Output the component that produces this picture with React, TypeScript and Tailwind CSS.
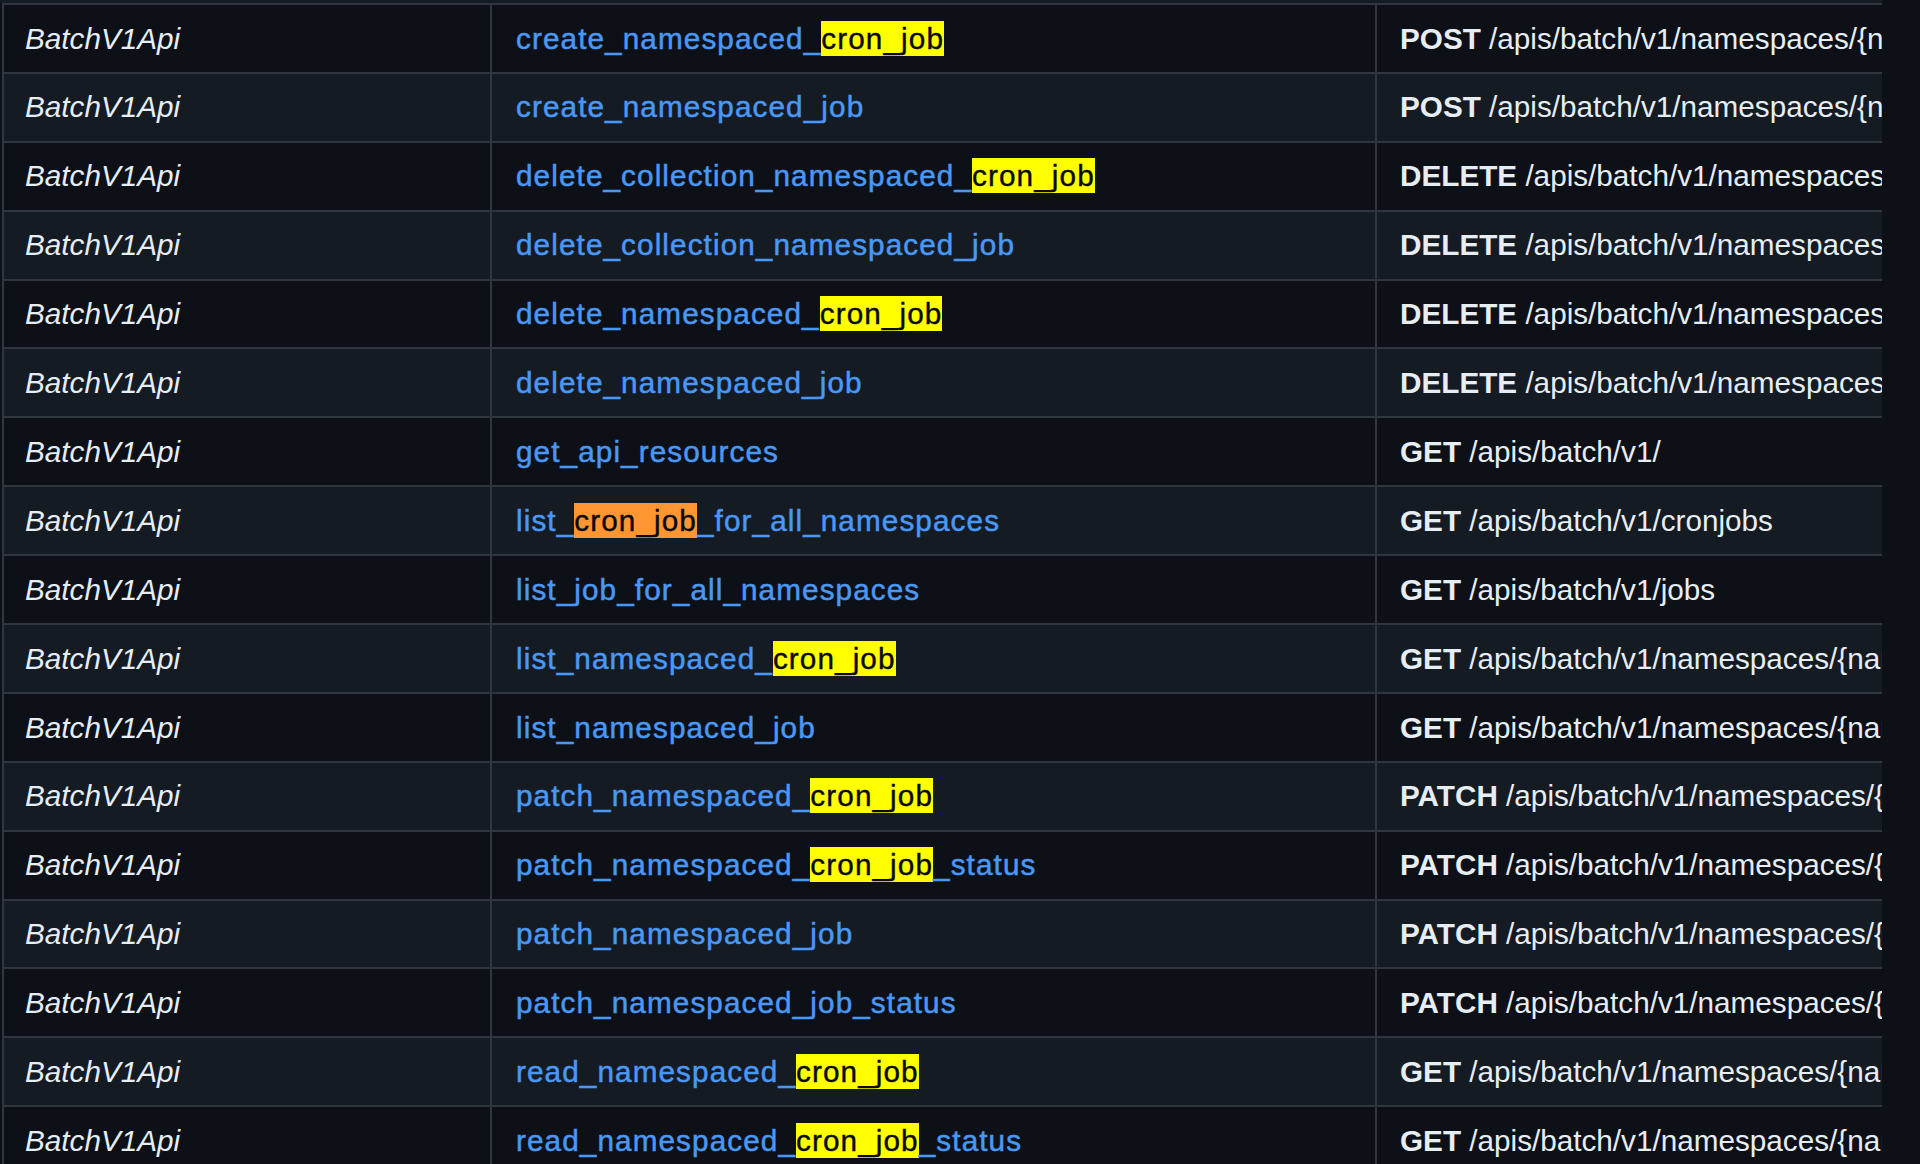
import React from "react";

type Row = { fn: string; method: string; path: string };

const NS = "/apis/batch/v1/namespaces/{namespace}";

const rows: Row[] = [
  { fn: "create_namespaced_cron_job", method: "POST", path: `${NS}/cronjobs` },
  { fn: "create_namespaced_job", method: "POST", path: `${NS}/jobs` },
  { fn: "delete_collection_namespaced_cron_job", method: "DELETE", path: `${NS}/cronjobs` },
  { fn: "delete_collection_namespaced_job", method: "DELETE", path: `${NS}/jobs` },
  { fn: "delete_namespaced_cron_job", method: "DELETE", path: `${NS}/cronjobs/{name}` },
  { fn: "delete_namespaced_job", method: "DELETE", path: `${NS}/jobs/{name}` },
  { fn: "get_api_resources", method: "GET", path: "/apis/batch/v1/" },
  { fn: "list_cron_job_for_all_namespaces", method: "GET", path: "/apis/batch/v1/cronjobs" },
  { fn: "list_job_for_all_namespaces", method: "GET", path: "/apis/batch/v1/jobs" },
  { fn: "list_namespaced_cron_job", method: "GET", path: `${NS}/cronjobs` },
  { fn: "list_namespaced_job", method: "GET", path: `${NS}/jobs` },
  { fn: "patch_namespaced_cron_job", method: "PATCH", path: `${NS}/cronjobs/{name}` },
  { fn: "patch_namespaced_cron_job_status", method: "PATCH", path: `${NS}/cronjobs/{name}/status` },
  { fn: "patch_namespaced_job", method: "PATCH", path: `${NS}/jobs/{name}` },
  { fn: "patch_namespaced_job_status", method: "PATCH", path: `${NS}/jobs/{name}/status` },
  { fn: "read_namespaced_cron_job", method: "GET", path: `${NS}/cronjobs/{name}` },
  { fn: "read_namespaced_cron_job_status", method: "GET", path: `${NS}/cronjobs/{name}/status` },
];

function FnName({ name, active }: { name: string; active: boolean }) {
  const key = "cron_job";
  const i = name.indexOf(key);
  if (i < 0) return <>{name}</>;
  return (
    <>
      {name.slice(0, i)}
      <span
        className={
          active
            ? "bg-[#ff9632] py-[1px] text-[#0a0a0a] [-webkit-text-stroke:0.4px_#0a0a0a]"
            : "bg-[#ffff00] py-[1px] text-[#0a0a0a] [-webkit-text-stroke:0.4px_#0a0a0a]"
        }
      >
        {key}
      </span>
      {name.slice(i + key.length)}
    </>
  );
}

export default function App() {
  return (
    <div
      className="w-full h-[1164px] overflow-hidden bg-[#0d1117]"
      style={{ fontFamily: '"Liberation Sans", Arial, sans-serif' }}
    >
      <div className="h-[3px] w-[1882px] bg-[#151b23]" />
      <div className="ml-[2px] w-[1880px] overflow-hidden border-b-2 border-[#30363d]">
        {rows.map((r, idx) => (
          <div
            key={idx}
            className={
              "flex h-[68.9px] border-t-2 border-[#30363d] text-[29.7px] leading-none " +
              (idx % 2 === 1 ? "bg-[#151b23]" : "bg-[#0d1117]")
            }
          >
            <div className="flex w-[488px] shrink-0 items-center border-l-2 border-[#30363d] pl-[21px] italic text-[#e6edf3]">
              BatchV1Api
            </div>
            <div className="flex w-[885px] shrink-0 items-center border-l-2 border-[#30363d] pl-[24px] whitespace-nowrap text-[#4a98f5] tracking-[1.1px] [-webkit-text-stroke:0.5px_#4a98f5]">
              <span>
                <FnName name={r.fn} active={idx === 7} />
              </span>
            </div>
            <div className="flex flex-1 min-w-0 items-center overflow-hidden border-l-2 border-[#30363d] pl-[23px] whitespace-nowrap text-[#e6edf3]">
              <span className="font-bold">{r.method}</span>
              <span>&nbsp;{r.path}</span>
            </div>
          </div>
        ))}
      </div>
    </div>
  );
}
